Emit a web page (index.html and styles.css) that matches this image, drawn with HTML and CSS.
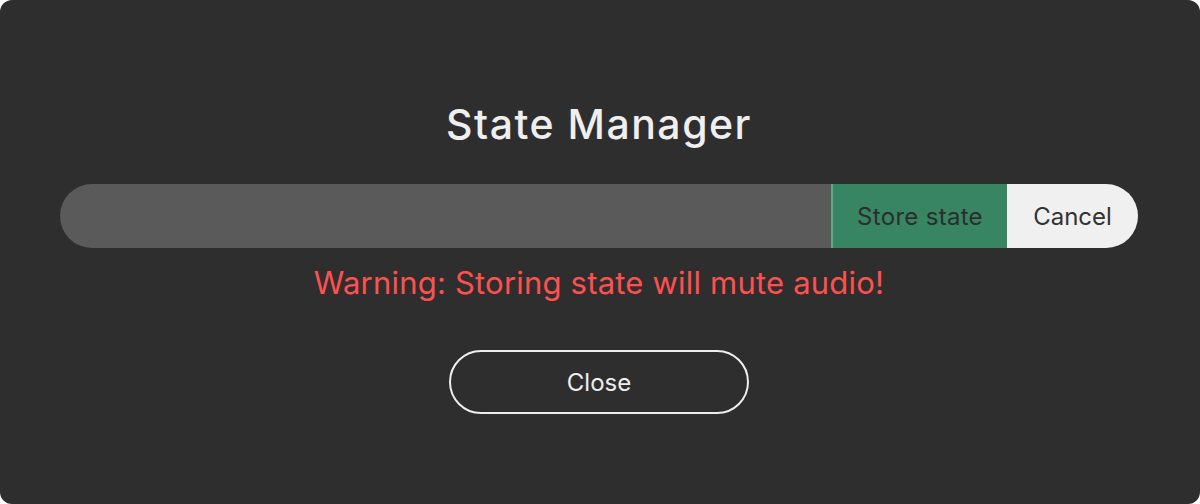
FILE: index.html
```html
<!DOCTYPE html>
<html>
<head>
<meta charset="utf-8">
<link rel="stylesheet" href="styles.css">
</head>
<body>
<div class="dialog">
  <h1 class="title">State Manager</h1>
  <div class="bar">
    <input class="name" type="text">
    <button class="store">Store state</button>
    <button class="cancel">Cancel</button>
  </div>
  <p class="warning">Warning: Storing state will mute audio!</p>
  <button class="close">Close</button>
</div>
</body>
</html>
```
FILE: styles.css
```css
html, body {
  margin: 0;
  padding: 0;
  background: #ffffff;
}
body {
  width: 1200px;
  height: 504px;
  font-family: Inter, "Noto Sans", sans-serif;
}
.dialog {
  box-sizing: border-box;
  width: 1200px;
  height: 504px;
  background: #2e2e2e;
  border-radius: 12px;
  padding: 96px 62px 0 60px;
  display: flex;
  flex-direction: column;
  align-items: center;
}
.title {
  margin: 0;
  font-size: 41px;
  font-weight: 500;
  letter-spacing: 1.5px;
  color: #efefef;
  line-height: 56px;
}
.bar {
  margin-top: 32px;
  width: 100%;
  height: 64px;
  display: flex;
  border-radius: 32px;
  overflow: hidden;
}
.name {
  flex: 1;
  border: none;
  background: #5a5a5a;
  margin: 0;
  padding: 0 32px;
  outline: none;
}
.store {
  width: 176px;
  border: none;
  border-left: 2px solid #5fa883;
  background: #378562;
  color: #2d2d2d;
  font-family: inherit;
  font-size: 24px;
  letter-spacing: 0.3px;
  margin: 0;
  padding: 0;
}
.cancel {
  width: 131px;
  border: none;
  background: #f0f0f0;
  color: #333333;
  font-family: inherit;
  font-size: 24px;
  margin: 0;
  padding: 0;
}
.warning {
  margin: 15px 0 0;
  font-size: 31px;
  letter-spacing: 0.2px;
  line-height: 40px;
  color: #ff5050;
}
.close {
  margin-top: 47px;
  width: 300px;
  height: 64px;
  border: 2px solid #eeeeee;
  border-radius: 32px;
  background: transparent;
  color: #eeeeee;
  font-family: inherit;
  font-size: 24px;
}
```
